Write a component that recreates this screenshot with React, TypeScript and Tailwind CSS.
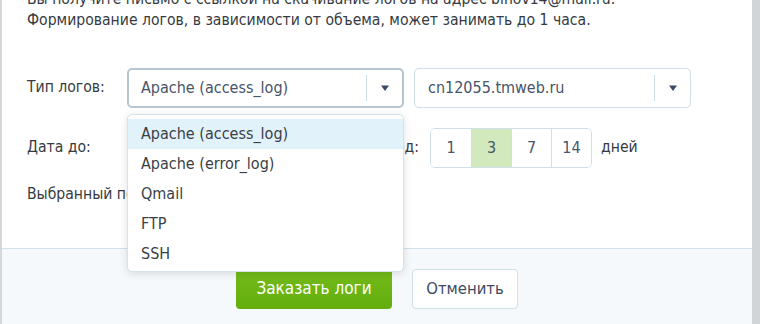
import React from "react";

const font = { fontFamily: '"DejaVu Sans Condensed", "DejaVu Sans", Tahoma, sans-serif' };

function Caret() {
  return (
    <svg width="10" height="8" viewBox="0 0 10 8" className="block">
      <path d="M1 1.5 L9 1.5 L5 7 Z" fill="#3b4a63" />
    </svg>
  );
}

function Select({ value, focused }: { value: string; focused?: boolean }) {
  return (
    <div
      className={
        "flex h-[40px] w-[277px] shrink-0 items-center rounded-[5px] bg-white " +
        (focused ? "border-2 border-[#b7c5cf]" : "border border-[#cfdfe6]")
      }
    >
      <div className={"flex-1 text-[16px] text-[#485468] " + (focused ? "pl-[12px]" : "pl-[13px]")}>{value}</div>
      <div className="h-[26px] w-px bg-[#cfdde4]" />
      <div className="flex w-[35px] items-center justify-center">
        <Caret />
      </div>
    </div>
  );
}

export default function App() {
  const items = ["Apache (access_log)", "Apache (error_log)", "Qmail", "FTP", "SSH"];
  return (
    <div className="relative flex h-[324px] w-[760px] overflow-hidden bg-white text-[#363b42]" style={font}>
      <div className="w-[2px] shrink-0 bg-[#d3d8db]" />
      <div className="flex w-[750px] shrink-0 flex-col">
        <div className="flex h-[248px] flex-col pl-[25px]">
          <div className="mt-[-11px] text-[15.6px] leading-[21px]">
            <div className="whitespace-nowrap">Вы получите письмо с ссылкой на скачивание логов на адрес binov14@mail.ru.</div>
            <div className="whitespace-nowrap">Формирование логов, в зависимости от объема, может занимать до 1 часа.</div>
          </div>
          <div className="mt-[37px] flex items-center">
            <div className="w-[100px] shrink-0 text-[15.6px]">Тип логов:</div>
            <Select value="Apache (access_log)" focused />
            <div className="w-[10px] shrink-0" />
            <Select value="cn12055.tmweb.ru" />
          </div>
          <div className="mt-[20px] flex h-[40px] items-center">
            <div className="w-[100px] shrink-0 text-[15.6px]">Дата до:</div>
            <div className="w-[292px] shrink-0 text-right text-[15.6px]">Период:</div>
            <div className="ml-[11px] flex h-[40px] shrink-0 overflow-hidden rounded-[5px] border border-[#cfdfe6] text-[16px] text-[#4a566b]">
              {["1", "3", "7", "14"].map((d, i) => (
                <div
                  key={d}
                  className={
                    "flex w-[40px] items-center justify-center " +
                    (i > 0 ? "border-l border-[#cfdfe6] " : "") +
                    (d === "3" ? "bg-[#d2e9bd]" : "bg-white")
                  }
                >
                  {d}
                </div>
              ))}
            </div>
            <div className="ml-[9px] text-[15.6px]">дней</div>
          </div>
          <div className="mt-[16px] text-[15.6px] leading-[20px]">Выбранный период:</div>
        </div>
        <div className="flex flex-1 items-start border-t border-[#cfe2ea] bg-[#f5f9fb] pl-[234px] pt-[20px]">
          <button className="h-[40px] w-[156px] shrink-0 rounded-[4px] bg-gradient-to-b from-[#74bb1b] to-[#63ae0b] text-[17px] text-white">
            Заказать логи
          </button>
          <button className="ml-[20px] h-[40px] w-[106px] shrink-0 rounded-[4px] border border-[#cfdfe6] bg-white text-[16.5px] text-[#3d4a5e]">
            Отменить
          </button>
        </div>
      </div>
      <div className="w-[8px] shrink-0 bg-[#d2d5d7]" />
      <div className="absolute left-[127px] top-[114px] w-[277px] rounded-[5px] border border-[#d6e2e8] bg-white pb-[2px] pt-[4px] shadow-[0_2px_8px_rgba(0,0,0,0.12)]">
        {items.map((it, i) => (
          <div
            key={it}
            className={"flex h-[30px] items-center pl-[13px] text-[16px] text-[#3a3f46] " + (i === 0 ? "bg-[#e1f2fb]" : "")}
          >
            {it}
          </div>
        ))}
      </div>
    </div>
  );
}
